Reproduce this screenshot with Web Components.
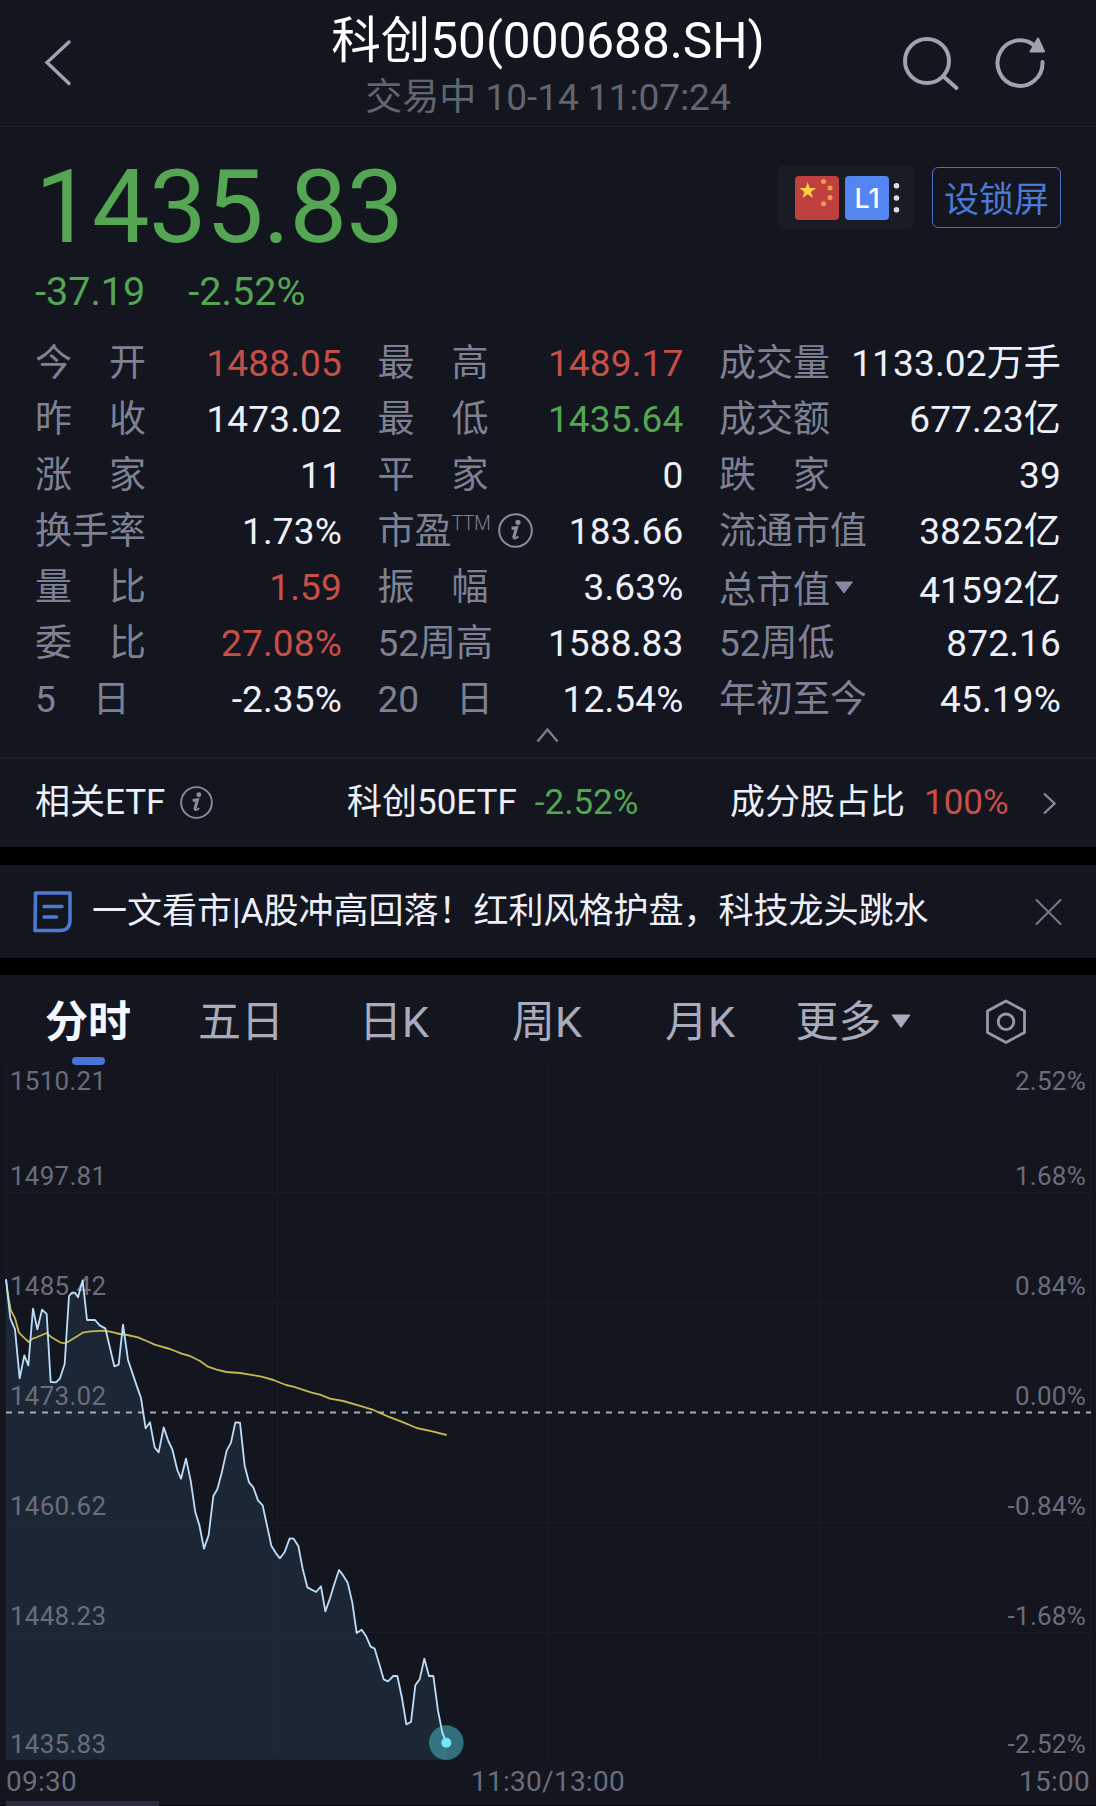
<!DOCTYPE html>
<html lang="zh-CN">
<head>
<meta charset="utf-8">
<title>科创50(000688.SH)</title>
<style>
    :root {
        --bg: #13161f;
        --line: #1c1f29;
        --text: #edf0fb;
        --muted: #7d8193;
        --dim: #62656f;
        --icon: #a0a2b2;
        --up: #c84f48;
        --down: #54a653;
        --accent: #4d78d4;
    }
    body {
        margin: 0;
        width: 1096px;
        height: 1806px;
        overflow: hidden;
        background: #000;
        color: var(--text);
        font-family: Roboto, "Noto Sans CJK SC", sans-serif;
    }
</style>
</head>
<body>
<quote-page>
    <quote-header slot="header" name="科创50(000688.SH)" status="交易中 10-14 11:07:24"></quote-header>
    <quote-price slot="quote" price="1435.83" change="-37.19" percent="-2.52%"></quote-price>
    <stat-grid slot="quote">
        <stat-item value="1488.05" tone="up">今　开</stat-item>
        <stat-item value="1489.17" tone="up">最　高</stat-item>
        <stat-item value="1133.02万手">成交量</stat-item>
        <stat-item value="1473.02">昨　收</stat-item>
        <stat-item value="1435.64" tone="down">最　低</stat-item>
        <stat-item value="677.23亿">成交额</stat-item>
        <stat-item value="11">涨　家</stat-item>
        <stat-item value="0">平　家</stat-item>
        <stat-item value="39">跌　家</stat-item>
        <stat-item value="1.73%">换手率</stat-item>
        <stat-item value="183.66">市盈<small slot="mark">TTM</small><info-icon slot="mark"></info-icon></stat-item>
        <stat-item value="38252亿">流通市值</stat-item>
        <stat-item value="1.59" tone="up">量　比</stat-item>
        <stat-item value="3.63%">振　幅</stat-item>
        <stat-item value="41592亿" menu>总市值</stat-item>
        <stat-item value="27.08%" tone="up">委　比</stat-item>
        <stat-item value="1588.83">52周高</stat-item>
        <stat-item value="872.16">52周低</stat-item>
        <stat-item value="-2.35%">5　日</stat-item>
        <stat-item value="12.54%">20　日</stat-item>
        <stat-item value="45.19%">年初至今</stat-item>
    </stat-grid>
    <etf-row slot="quote"></etf-row>
    <news-bar slot="news">一文看市|A股冲高回落！红利风格护盘，科技龙头跳水</news-bar>
    <chart-tabs slot="chart"></chart-tabs>
    <minute-chart slot="chart"></minute-chart>
</quote-page>

<script>
class BaseElement extends HTMLElement {
    constructor() {
        super();
        this.attachShadow({ mode: "open" });
    }

    connectedCallback() {
        this.shadowRoot.innerHTML = this.template;
    }

    attr(name) {
        return this.getAttribute(name) || "";
    }
}

class QuotePage extends BaseElement {
    get template() {
        return `
        <style>
            :host { display: flex; flex-direction: column; height: 1806px; }
            section { background: var(--bg); box-sizing: border-box; }
            .top { height: 847px; }
            .news { height: 93px; margin: 18px 0 17px; }
            .chart { flex: 1; }
        </style>
        <section class="top"><slot name="header"></slot><slot name="quote"></slot></section>
        <section class="news"><slot name="news"></slot></section>
        <section class="chart"><slot name="chart"></slot></section>`;
    }
}

class QuoteHeader extends BaseElement {
    get template() {
        return `
        <style>
            :host {
                display: grid;
                grid-template-columns: 240px 1fr 240px;
                height: 127px;
                box-sizing: border-box;
                border-bottom: 1px solid var(--line);
            }
            svg { display: block; fill: none; stroke: var(--icon); stroke-linecap: round; }
            .title { padding-top: 11px; text-align: center; white-space: nowrap; }
            h1 { margin: 0 0 5px; font-size: 49.5px; line-height: 60px; font-weight: 400; color: #fff; }
            p { margin: 0; font-size: 37px; line-height: 44px; color: var(--dim); }
        </style>
        <svg width="240" height="126" stroke-width="3.4"><path d="M69 42 47 62.5 69 83.500"/></svg>
        <div class="title"><h1>${this.attr("name")}</h1><p>${this.attr("status")}</p></div>
        <svg width="240" height="126" stroke-width="4">
            <circle cx="71" cy="61" r="22"/>
            <path d="M87.500 76.500 100.500 88"/>
            <path d="M186.500 62A22.500 22.800 0 1 1 179 46"/>
            <path d="M182 38.500 188 51.500H174.500Z" fill="#a0a2b2" stroke-width="2" stroke-linejoin="round"/>
        </svg>`;
    }
}

class QuotePrice extends BaseElement {
    get template() {
        return `
        <style>
            :host { display: flex; justify-content: space-between; padding: 30px 35px 0; height: 179px; }
            .price { font-size: 102.5px; line-height: 100px; letter-spacing: -0.6px; color: var(--down); }
            .change { display: flex; gap: 43px; margin-top: 10px; font-size: 39.6px; line-height: 50px; color: var(--down); }
            .side { display: flex; gap: 18px; margin-top: 9px; height: 63px; align-items: center; }
            .badges {
                display: flex;
                align-items: center;
                width: 137px;
                height: 63px;
                box-sizing: border-box;
                padding-left: 18px;
                gap: 6px;
                border-radius: 6px;
                background: #1a1c25;
            }
            .level {
                width: 44px;
                height: 44px;
                border-radius: 4px;
                background: #5486f2;
                color: #fff;
                font: 500 27px/46px Inter, Roboto, sans-serif;
                text-align: center;
            }
            button {
                width: 129px;
                height: 61px;
                margin: 0;
                padding: 0 0 3px;
                border: 1.5px solid #4a70c0;
                border-radius: 6px;
                background: none;
                color: var(--accent);
                font: 35px/55px "Noto Sans CJK SC", sans-serif;
                white-space: nowrap;
            }
        </style>
        <div>
            <div class="price">${this.attr("price")}</div>
            <div class="change"><span>${this.attr("change")}</span><span>${this.attr("percent")}</span></div>
        </div>
        <div class="side">
            <div class="badges">
                <svg width="44" height="44" viewBox="0 0 44 44">
                    <rect width="44" height="44" rx="4" fill="#c0403f"/>
                    <path d="M12.700 6 14.700 12.100H21.100L15.900 15.900 17.900 22 12.700 18.200 7.500 22 9.500 15.900 4.300 12.100H10.700Z" fill="#fcd04b"/>
                    <g fill="#ee9f45"><circle cx="28.500" cy="5.500" r="2.500"/><circle cx="35" cy="12" r="2.500"/><circle cx="35" cy="21.500" r="2.500"/><circle cx="28.500" cy="27.700" r="2.500"/></g>
                </svg>
                <span class="level">L1</span>
                <svg width="8" height="44" viewBox="0 0 8 44" fill="#d9dbe2" style="margin-left:-2px">
                    <circle cx="3.500" cy="9.800" r="2.800"/><circle cx="3.500" cy="22" r="2.800"/><circle cx="3.500" cy="33.800" r="2.800"/>
                </svg>
            </div>
            <button>设锁屏</button>
        </div>`;
    }
}

class InfoIcon extends BaseElement {
    get template() {
        return `
        <style>
            :host { display: block; width: 35px; height: 35px; color: #898c9c; }
            svg { display: block; width: 100%; height: 100%; }
        </style>
        <svg viewBox="0 0 35 35" fill="none" stroke="currentColor">
            <circle cx="17.500" cy="17.500" r="16.300" stroke-width="2"/>
            <circle cx="20" cy="9.300" r="2.600" fill="currentColor" stroke="none"/>
            <path d="M13.500 15.300 18.500 14.600 15.800 24.500" stroke-width="3.200"/>
            <path d="M15.600 23.500Q15 27.500 20.500 23.500" stroke-width="2"/>
        </svg>`;
    }
}

class StatGrid extends BaseElement {
    get template() {
        return `
        <style>
            :host { display: block; }
            .grid {
                display: grid;
                grid-template-columns: 307px 306px 342px;
                grid-auto-rows: 56px;
                column-gap: 35.5px;
                padding: 0 35px;
            }
            svg { display: block; margin: -1px auto 0; fill: none; stroke: #7c7e8c; stroke-width: 2.4; }
        </style>
        <div class="grid"><slot></slot></div>
        <svg width="24" height="30"><path d="M1.500 14.500 11.500 2.500 21.500 14.500"/></svg>`;
    }
}

class StatItem extends BaseElement {
    get template() {
        const tone = this.attr("tone");
        const color = tone ? `var(--${tone})` : "var(--text)";
        const arrow = this.hasAttribute("menu")
            ? `<svg width="20" height="14"><path d="M1.500 1H18.500L10 12Z" fill="#8588a0" stroke="#8588a0" stroke-linejoin="round"/></svg>`
            : "";
        return `
        <style>
            :host { display: flex; justify-content: space-between; font-size: 37px; line-height: 56px; white-space: nowrap; }
            :host([menu]) { padding-top: 3px; height: 53px; }
            .label { display: flex; color: var(--muted); }
            .label svg { margin: 18px 0 0 4px; }
            .value { color: ${color}; letter-spacing: 0.15px; }
            ::slotted(small) { font: 300 19.5px/40px Roboto, sans-serif; letter-spacing: -0.5px; }
            ::slotted(info-icon) { margin: 9px 0 0 8px; }
        </style>
        <span class="label"><span><slot></slot></span><slot name="mark"></slot>${arrow}</span>
        <span class="value">${this.attr("value")}</span>`;
    }
}

class EtfRow extends BaseElement {
    get template() {
        return `
        <style>
            :host {
                display: grid;
                grid-template-columns: 312px 383px 1fr auto;
                align-items: center;
                height: 89px;
                box-sizing: border-box;
                padding: 1px 35px 0;
                border-top: 1px solid var(--line);
                font-size: 35px;
                white-space: nowrap;
            }
            div { display: flex; align-items: center; line-height: 50px; padding-top: 1px; }
            info-icon { width: 33px; height: 33px; margin: -2px 0 0 15px; }
            .down { color: var(--down); margin-left: 18px; }
            .up { color: var(--up); margin-left: 19px; }
            svg { fill: none; stroke: #858897; stroke-width: 2.4; }
        </style>
        <div>相关ETF<info-icon></info-icon></div>
        <div>科创50ETF<span class="down">-2.52%</span></div>
        <div>成分股占比<span class="up">100%</span></div>
        <svg width="20" height="24"><path d="M3 2.500 13.500 12.500 3 22.500"/></svg>`;
    }
}

class NewsBar extends BaseElement {
    get template() {
        return `
        <style>
            :host { display: flex; align-items: center; height: 93px; padding: 0 33px; font-size: 35px; line-height: 50px; white-space: nowrap; }
            span { flex: 1; margin: 0 0 0 19px; }
            svg { fill: none; }
        </style>
        <svg width="40" height="42" stroke="#4d78d4" stroke-width="3.600" stroke-linecap="round" stroke-linejoin="round">
            <path d="M2.500 2H37V29Q37 39.500 27 39.500H2Z"/>
            <path d="M11 15.500H29M11 26H23.500"/>
        </svg>
        <span><slot></slot></span>
        <svg width="28" height="28" stroke="#777a88" stroke-width="2"><path d="M1 1.500 26 26.500M26 1.500 1 26.500"/></svg>`;
    }
}

class ChartTabs extends BaseElement {
    get template() {
        const tabs = ["五日", "日K", "周K", "月K"].map((name) => `<div>${name}</div>`).join("");
        return `
        <style>
            :host { display: grid; grid-template-columns: repeat(7, 153px); height: 90px; padding-left: 11.5px; color: #a9abbc; }
            div {
                display: flex;
                justify-content: center;
                padding-top: 22px;
                font-size: 43px;
                line-height: 50px;
                white-space: nowrap;
            }
            .active { flex-direction: column; align-items: center; justify-content: flex-start; color: #f5f7ff; font-weight: 700; }
            .active::after { content: ""; width: 33px; height: 8px; margin-top: 10px; border-radius: 4px; background: #4a73d6; }
            .more svg { margin: 17px 0 0 9px; }
        </style>
        <div class="active">分时</div>
        ${tabs}
        <div class="more">更多<svg width="20" height="15"><path d="M1 1H19L10 13.500Z" fill="#a9abbc" stroke="#a9abbc" stroke-linejoin="round"/></svg></div>
        <div><svg width="44" height="48" fill="none" stroke="#9698a8" stroke-width="2.800" stroke-linejoin="round">
            <path d="M22 4 40.500 14V35.500L22 45.500 3.500 35.500V14Z"/><circle cx="22" cy="24.800" r="7.800"/>
        </svg></div>`;
    }
}

// Both series are stored in thirds of a pixel, measured from 175px below the chart top
const PRICE = `18,118 31,235 45,268 59,415 73,346 85,376 99,206 112,268 126,209 140,222 152,426 168,427
    180,415 194,372 207,168 216,158 225,158 234,172 248,121 261,240 285,240 299,256 316,265 343,379
    356,374 369,254 384,360 410,437 423,474 437,565 450,547 464,622 476,637 491,562 505,603 517,628
    532,690 543,716 558,656 572,722 586,817 598,855 612,926 626,885 640,768 652,748 666,695 680,632
    693,608 706,547 720,548 734,677 747,727 760,742 774,781 788,796 814,917 828,940 840,955 854,936
    869,895 881,896 895,918 908,986 922,1042 948,1056 963,1039 976,1114 990,1075 1003,1032 1017,990
    1030,1007 1043,1028 1057,1088 1070,1179 1085,1169 1098,1188 1112,1220 1124,1226 1138,1273
    1151,1318 1164,1324 1180,1308 1192,1308 1206,1374 1219,1453 1233,1446 1246,1336 1259,1318
    1273,1256 1287,1308 1300,1308 1314,1412 1327,1478 1339,1508`;

const AVERAGE = `18,118 24,165 32,210 45,235 57,278 72,293 86,306 98,296 112,291 140,279 152,290 180,307
    194,310 207,304 234,287 248,278 272,274 312,272 330,275 360,282 382,285 414,292 440,303 464,314
    510,327 545,341 570,348 600,363 624,380 650,389 680,396 720,399 750,404 785,410 820,420 858,435
    880,440 935,458 960,464 990,476 1030,483 1075,496 1120,510 1165,530 1210,547 1250,564 1300,575
    1340,585`;

const LEVELS = [
    ["1510.21", "2.52%", 25],
    ["1497.81", "1.68%", 120],
    ["1485.42", "0.84%", 230],
    ["1473.02", "0.00%", 340],
    ["1460.62", "-0.84%", 450],
    ["1448.23", "-1.68%", 560],
    ["1435.83", "-2.52%", 688],
];

class MinuteChart extends BaseElement {
    get template() {
        const labels = LEVELS.map(([price, percent, y]) => `
            <text x="10" y="${y}">${price}</text>
            <text x="1086" y="${y}" text-anchor="end">${percent}</text>`).join("");
        return `
        <style>
            :host { display: block; height: 741px; }
            svg { display: block; }
            text { font-size: 26px; letter-spacing: 0.25px; fill: #696d7b; }
            .time text { font-size: 28px; }
        </style>
        <svg width="1096" height="741" fill="none">
            <path d="M6.500 0V694M277.500 0V694M548.500 0V694M820.500 0V694M1090.500 0V694M6 127.500H1091M6 237.500H1091M6 457.500H1091M6 567.500H1091" stroke="#191c26"/>
            <g transform="translate(0 175) scale(.33333)">
                <polygon points="${PRICE} 1339,1559 18,1559" fill="#2c485c" fill-opacity=".35"/>
            </g>
            ${labels}
            <path d="M6 347.500H1091" stroke="#a9adb6" stroke-width="2" stroke-dasharray="6 6"/>
            <g transform="translate(0 175) scale(.33333)" stroke-linejoin="round">
                <polyline points="${AVERAGE}" stroke="#c5b750" stroke-width="5.500"/>
                <circle cx="1339" cy="1508" r="52" fill="#46a5b5" fill-opacity=".62"/>
                <polyline points="${PRICE}" stroke="#bcdcf8" stroke-width="5.500"/>
                <circle cx="1339" cy="1508" r="15" fill="#74e6fa"/>
            </g>
            <g class="time">
                <text x="6" y="726">09:30</text>
                <text x="548" y="726" text-anchor="middle">11:30/13:00</text>
                <text x="1090" y="726" text-anchor="end">15:00</text>
            </g>
            <path d="M0 740.500H1096" stroke="#06070d"/>
            <rect x="6" y="736" width="153" height="5" fill="#2b2b3b"/>
        </svg>`;
    }
}

customElements.define("quote-page", QuotePage);
customElements.define("quote-header", QuoteHeader);
customElements.define("quote-price", QuotePrice);
customElements.define("info-icon", InfoIcon);
customElements.define("stat-grid", StatGrid);
customElements.define("stat-item", StatItem);
customElements.define("etf-row", EtfRow);
customElements.define("news-bar", NewsBar);
customElements.define("chart-tabs", ChartTabs);
customElements.define("minute-chart", MinuteChart);
</script>
</body>
</html>
